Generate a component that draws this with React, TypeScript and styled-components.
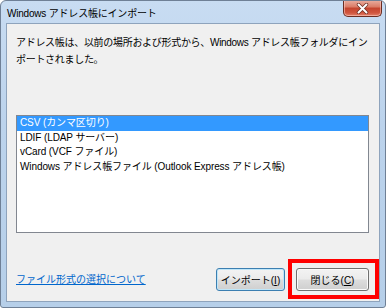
import React from "react";
import styled, { createGlobalStyle } from "styled-components";

const GlobalStyle = createGlobalStyle`
  html, body { margin: 0; padding: 0; background: #ffffff; }
  body { font-family: "Liberation Sans", "Noto Sans CJK JP", sans-serif; }
  * { box-sizing: border-box; }
`;

const Window = styled.div`
  width: 386px;
  height: 308px;
  border: 1px solid #6f8096;
  border-radius: 6px 6px 3px 3px;
  background: linear-gradient(180deg, #c8dcf2 0%, #bcd3ec 40%, #b6cfe9 100%);
  padding: 0 5px 5px 5px;
  display: flex;
  flex-direction: column;
  overflow: hidden;
`;

const TitleBar = styled.div`
  height: 22px;
  display: flex;
  align-items: center;
  padding-left: 1px;
`;

const Title = styled.span`
  font-size: 10px;
  letter-spacing: -0.2px;
  color: #000;
  white-space: nowrap;
`;

const CaptionClose = styled.div`
  margin-left: auto;
  align-self: flex-start;
  margin-top: -1px;
  margin-right: -2px;
  width: 39px;
  height: 17px;
  border: 1px solid #6b2d22;
  border-top: none;
  border-radius: 0 0 5px 5px;
  background: linear-gradient(180deg, #eab0a2 0%, #db7d68 42%, #c5452f 52%, #d0563f 80%, #e2806a 100%);
  box-shadow: inset 0 0 0 1px rgba(255, 210, 200, 0.55);
  display: flex;
  align-items: center;
  justify-content: center;
`;

const Content = styled.div`
  flex: 1;
  border: 1px solid #8ea3bc;
  background: #f0f0f0;
  padding: 10px 10px 10px 9px;
  display: flex;
  flex-direction: column;
`;

const Description = styled.p`
  margin: 0;
  font-size: 10px;
  line-height: 17px;
  letter-spacing: -0.3px;
  color: #000;
`;

const Line = styled.span`
  display: block;
  white-space: nowrap;
`;

const ListBox = styled.ul`
  list-style: none;
  margin: 47px 0 0 0;
  padding: 0;
  height: 118px;
  border: 1px solid #828790;
  background: #ffffff;
`;

const ListItem = styled.li<{ $selected?: boolean }>`
  height: 14.5px;
  line-height: 14.5px;
  padding-left: 3px;
  font-size: 10px;
  letter-spacing: -0.1px;
  white-space: nowrap;
  color: ${(p) => (p.$selected ? "#ffffff" : "#000000")};
  background: ${(p) => (p.$selected ? "#3399ff" : "transparent")};
`;

const Footer = styled.div`
  margin-top: auto;
  display: flex;
  align-items: center;
  gap: 11px;
`;

const HelpLink = styled.a`
  font-size: 10px;
  color: #0066cc;
  text-decoration: underline;
  margin-right: auto;
  margin-bottom: 3px;
  white-space: nowrap;
  cursor: pointer;
`;

const Button = styled.button<{ $default?: boolean; $w: number }>`
  position: relative;
  width: ${(p) => p.$w}px;
  height: 23px;
  padding: 0;
  font-family: inherit;
  font-size: 10px;
  color: #000;
  border-radius: 3px;
  border: 1px solid ${(p) => (p.$default ? "#3c7fb1" : "#707070")};
  box-shadow: inset 0 0 0 1px ${(p) => (p.$default ? "#bfe6f9" : "#fbfbfb")};
  background: linear-gradient(180deg, #f3f3f3 0%, #ebebeb 48%, #dddddd 52%, #cfcfcf 100%);
  white-space: nowrap;
`;

const Mnemonic = styled.span`
  text-decoration: underline;
`;

const Highlight = styled.span`
  position: absolute;
  left: -9px;
  top: -10px;
  right: -11px;
  bottom: -9px;
  border: 4px solid #ff0000;
  pointer-events: none;
`;

export default function App() {
  return (
    <>
      <GlobalStyle />
      <Window>
        <TitleBar>
          <Title>Windows アドレス帳にインポート</Title>
          <CaptionClose>
            <svg width="13" height="11" viewBox="0 0 13 11">
              <path d="M2.5 1.5 L10.5 9.5 M10.5 1.5 L2.5 9.5" stroke="#6b2d22" strokeWidth="3.4" strokeLinecap="round" />
              <path d="M2.5 1.5 L10.5 9.5 M10.5 1.5 L2.5 9.5" stroke="#ffffff" strokeWidth="2" strokeLinecap="round" />
            </svg>
          </CaptionClose>
        </TitleBar>
        <Content>
          <Description>
            <Line>アドレス帳は、以前の場所および形式から、Windows アドレス帳フォルダにイン</Line>
            <Line>ポートされました。</Line>
          </Description>
          <ListBox>
            <ListItem $selected>CSV (カンマ区切り)</ListItem>
            <ListItem>LDIF (LDAP サーバー)</ListItem>
            <ListItem>vCard (VCF ファイル)</ListItem>
            <ListItem>Windows アドレス帳ファイル (Outlook Express アドレス帳)</ListItem>
          </ListBox>
          <Footer>
            <HelpLink>ファイル形式の選択について</HelpLink>
            <Button $default $w={69}>
              インポート(<Mnemonic>I</Mnemonic>)
            </Button>
            <Button $w={73}>
              閉じる(<Mnemonic>C</Mnemonic>)
              <Highlight />
            </Button>
          </Footer>
        </Content>
      </Window>
    </>
  );
}
